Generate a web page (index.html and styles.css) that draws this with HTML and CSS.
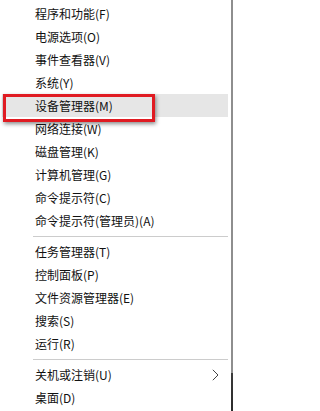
FILE: index.html
```html
<!DOCTYPE html>
<html lang="zh-CN">
<head>
<meta charset="utf-8">
<title>Win+X 菜单</title>
<link rel="stylesheet" href="styles.css">
</head>
<body>
<div class="screen">
  <div class="menu">
    <div class="item">程序和功能(F)</div>
    <div class="item">电源选项(O)</div>
    <div class="item">事件查看器(V)</div>
    <div class="item">系统(Y)</div>
    <div class="item hover">设备管理器(M)<span class="mark"></span></div>
    <div class="item">网络连接(W)</div>
    <div class="item">磁盘管理(K)</div>
    <div class="item">计算机管理(G)</div>
    <div class="item">命令提示符(C)</div>
    <div class="item">命令提示符(管理员)(A)</div>
    <div class="sep"></div>
    <div class="item">任务管理器(T)</div>
    <div class="item">控制面板(P)</div>
    <div class="item">文件资源管理器(E)</div>
    <div class="item">搜索(S)</div>
    <div class="item">运行(R)</div>
    <div class="sep"></div>
    <div class="item sub">关机或注销(U)<svg class="chev" width="7" height="12" viewBox="0 0 7 12"><path d="M0.8 0.8 L6 6 L0.8 11.2" fill="none" stroke="#444" stroke-width="1"/></svg></div>
    <div class="item">桌面(D)</div>
  </div>
  <div class="edge"></div>
</div>
</body>
</html>
```
FILE: styles.css
```css
html, body {
  margin: 0;
  padding: 0;
  background: #ffffff;
}
.screen {
  display: flex;
  width: 233px;
  height: 411px;
  overflow: hidden;
}
.menu {
  position: relative;
  width: 231px;
  padding-top: 2px;
  background: #ffffff;
  font-family: "Noto Sans CJK SC", "Noto Sans", sans-serif;
  font-size: 12px;
  color: #111111;
}
.item {
  position: relative;
  display: flex;
  align-items: center;
  height: 23px;
  padding-left: 33px;
  margin: 0 3px 0 2px;
  white-space: nowrap;
}
.item.hover {
  background: #e6e6e6;
}
.item.sub {
  justify-content: space-between;
  padding-right: 9px;
}
.chev {
  display: block;
}
.mark {
  position: absolute;
  left: 1px;
  top: 0;
  width: 146px;
  height: 22px;
  border: 3px solid #e01b22;
  box-shadow: 1px 2px 4px rgba(0, 0, 0, 0.45);
}
.sep {
  height: 1px;
  margin: 4px 3px 3px 33px;
  background: #cccccc;
}
.edge {
  width: 2px;
  background: linear-gradient(to bottom, #8e8e8e 0, #8e8e8e 373px, #3a3a3a 373px, #2a2a2a 411px);
}
```
